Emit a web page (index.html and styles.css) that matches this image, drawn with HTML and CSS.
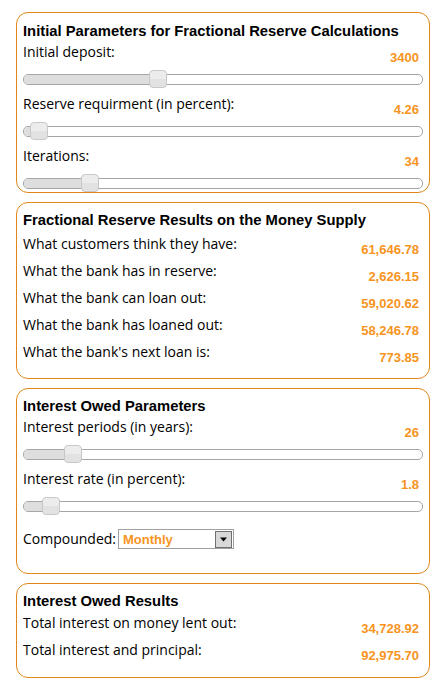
FILE: index.html
```html
<!DOCTYPE html>
<html>
<head>
<meta charset="utf-8">
<link rel="stylesheet" href="styles.css">
</head>
<body>
<div class="page">
  <section class="panel panel-params">
    <h2>Initial Parameters for Fractional Reserve Calculations</h2>
    <div class="field">
      <div class="row"><span class="label">Initial deposit:</span><span class="value">3400</span></div>
      <div class="slider"><div class="track"><div class="fill" style="width:135px"></div></div><div class="thumb" style="left:126px"></div></div>
    </div>
    <div class="field">
      <div class="row"><span class="label">Reserve requirment (in percent):</span><span class="value">4.26</span></div>
      <div class="slider"><div class="track"><div class="fill" style="width:16px"></div></div><div class="thumb" style="left:7px"></div></div>
    </div>
    <div class="field">
      <div class="row"><span class="label">Iterations:</span><span class="value">34</span></div>
      <div class="slider"><div class="track"><div class="fill" style="width:66px"></div></div><div class="thumb" style="left:58px"></div></div>
    </div>
  </section>

  <section class="panel panel-results">
    <h2>Fractional Reserve Results on the Money Supply</h2>
    <div class="row result"><span class="label">What customers think they have:</span><span class="value">61,646.78</span></div>
    <div class="row result"><span class="label">What the bank has in reserve:</span><span class="value">2,626.15</span></div>
    <div class="row result"><span class="label">What the bank can loan out:</span><span class="value">59,020.62</span></div>
    <div class="row result"><span class="label">What the bank has loaned out:</span><span class="value">58,246.78</span></div>
    <div class="row result"><span class="label">What the bank's next loan is:</span><span class="value">773.85</span></div>
  </section>

  <section class="panel panel-interest">
    <h2>Interest Owed Parameters</h2>
    <div class="field">
      <div class="row"><span class="label">Interest periods (in years):</span><span class="value">26</span></div>
      <div class="slider"><div class="track"><div class="fill" style="width:50px"></div></div><div class="thumb" style="left:41px"></div></div>
    </div>
    <div class="field">
      <div class="row"><span class="label">Interest rate (in percent):</span><span class="value">1.8</span></div>
      <div class="slider"><div class="track"><div class="fill" style="width:28px"></div></div><div class="thumb" style="left:19px"></div></div>
    </div>
    <div class="compound">
      <span class="label">Compounded:</span>
      <div class="select"><span class="select-text">Monthly</span><span class="select-btn"><svg width="9" height="5" viewBox="0 0 9 5"><path d="M1 0.5h7l-3.5 4z" fill="#000"/></svg></span></div>
    </div>
  </section>

  <section class="panel panel-owed">
    <h2>Interest Owed Results</h2>
    <div class="row result"><span class="label">Total interest on money lent out:</span><span class="value">34,728.92</span></div>
    <div class="row result"><span class="label">Total interest and principal:</span><span class="value">92,975.70</span></div>
  </section>
</div>
</body>
</html>
```

FILE: styles.css
```css
html, body {
  margin: 0;
  padding: 0;
  background: #fff;
}
body {
  font-family: "Open Sans", "Noto Sans", sans-serif;
  color: #000;
}
.page {
  padding: 12px 18px 0 16px;
  display: flex;
  flex-direction: column;
  gap: 9px;
}
.panel {
  border: 1px solid #e0861a;
  border-radius: 12px;
  padding: 9px 6px 0 6px;
}
h2 {
  margin: 0;
  font-family: "Liberation Sans", Arial, sans-serif;
  font-weight: bold;
  font-size: 14.8px;
  line-height: 18px;
  color: #000;
}
.row {
  display: flex;
  justify-content: space-between;
  align-items: flex-start;
}
.label {
  font-size: 14px;
  line-height: 20px;
}
.value {
  font-family: "Liberation Sans", Arial, sans-serif;
  font-weight: bold;
  font-size: 13px;
  line-height: 16px;
  color: #f7941d;
  padding-top: 8px;
  margin-right: 4px;
}
.field {
  height: 52px;
  margin-top: 2px;
}
.field + .field { margin-top: 0; }
.panel-params .field:last-child { height: 46px; }
.field .row { height: 28px; }
.slider {
  position: relative;
  height: 18px;
  width: 400px;
}
.track {
  position: absolute;
  left: 0;
  right: 0;
  top: 4px;
  height: 9px;
  border: 1px solid #a6a6a6;
  border-radius: 5px;
  background: #fff;
  overflow: hidden;
}
.fill {
  height: 100%;
  background: #dedede;
}
.thumb {
  position: absolute;
  top: 0;
  width: 16px;
  height: 16px;
  border: 1px solid #c8c8c8;
  border-radius: 4px;
  background: linear-gradient(#ececec 0%, #ececec 50%, #e2e2e2 50%, #e2e2e2 100%);
}
.panel-params { padding-bottom: 0; }
.panel-results { padding-top: 8px; padding-bottom: 9px; }
.result { height: 27px; }
.panel-results h2 { margin-bottom: 5px; }
.panel-owed h2 { margin-bottom: 3px; }
.panel-interest { padding-top: 8px; padding-bottom: 24px; }
.panel-interest h2 { margin-bottom: 2px; }
.panel-owed { padding-top: 8px; padding-bottom: 10px; }
.compound {
  display: flex;
  align-items: center;
  gap: 2px;
  margin-top: 8px;
}
.select {
  width: 114px;
  height: 18px;
  border: 1px solid #a0a0a0;
  display: flex;
  align-items: center;
  justify-content: space-between;
  background: #fff;
}
.select-text {
  font-family: "Liberation Sans", Arial, sans-serif;
  font-weight: bold;
  font-size: 13px;
  color: #f7941d;
  padding-left: 4px;
}
.select-btn {
  width: 15px;
  height: 15px;
  margin-right: 1px;
  border: 1px solid #707070;
  background: #d8d8d8;
  display: flex;
  align-items: center;
  justify-content: center;
}
```
